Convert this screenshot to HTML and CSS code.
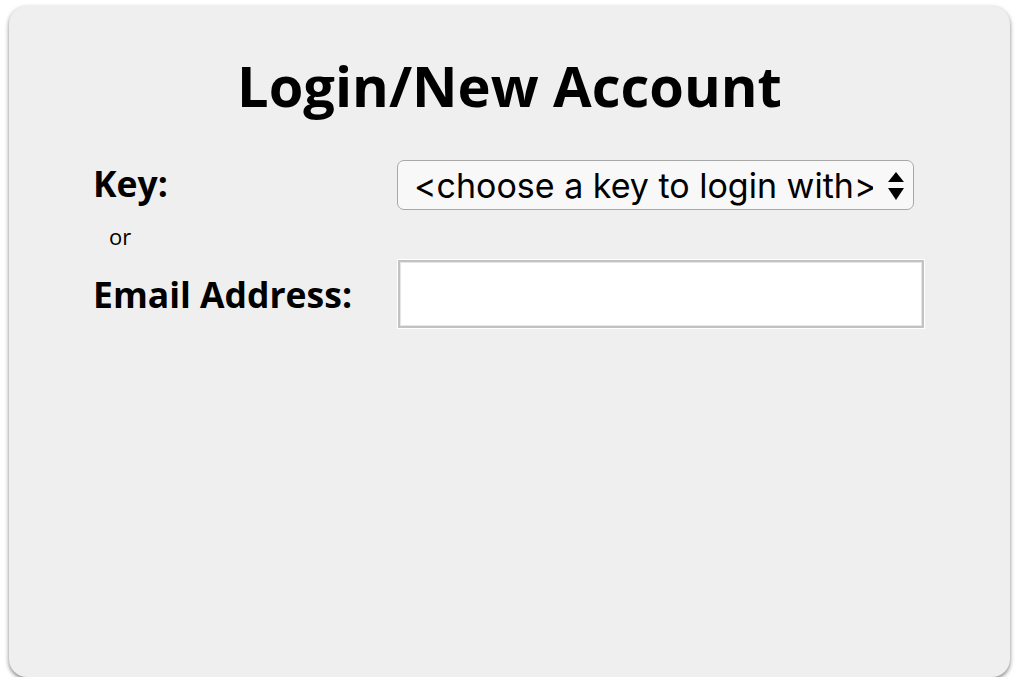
FILE: index.html
```html
<!DOCTYPE html>
<html lang="en">
<head>
<meta charset="utf-8">
<title>Login/New Account</title>
<link rel="stylesheet" href="styles.css">
</head>
<body>
<main class="panel">
  <h1 class="title">Login/New Account</h1>
  <form class="form">
    <div class="row row-key">
      <label class="label label-key" for="key">Key:</label>
      <div class="select-wrap">
        <select id="key" class="select">
          <option>&lt;choose a key to login with&gt;</option>
        </select>
        <svg class="select-arrows" width="18" height="30" viewBox="0 0 18 30" aria-hidden="true">
          <polygon points="1,11 17,11 9,1" fill="#000"/>
          <polygon points="1,17 17,17 9,29" fill="#000"/>
        </svg>
      </div>
    </div>
    <div class="or">or</div>
    <div class="row row-email">
      <label class="label" for="email">Email Address:</label>
      <input id="email" class="input" type="text">
    </div>
  </form>
</main>
</body>
</html>
```

FILE: styles.css
```css
html, body {
  margin: 0;
  padding: 0;
  background: #ffffff;
}

body {
  padding: 6px 0 0 9px;
  font-family: "Open Sans", "Liberation Sans", sans-serif;
  color: #000;
}

.panel {
  box-sizing: border-box;
  width: 1001px;
  height: 671px;
  padding: 40px 86px 0 84px;
  background: #efefef;
  border-radius: 18px;
  box-shadow: 0 2px 4px rgba(0, 0, 0, 0.5);
}

.title {
  margin: 0;
  text-align: center;
  font-family: "Open Sans", sans-serif;
  font-weight: 700;
  font-size: 56px;
  line-height: 78px;
  padding-left: 2px;
}

.form {
  margin-top: 36px;
}

.row {
  display: flex;
  align-items: center;
}

.label {
  width: 304px;
  flex: none;
  font-family: "Open Sans", sans-serif;
  font-weight: 700;
  font-size: 35.5px;
  line-height: 44px;
}

.label-key {
  padding-bottom: 4px;
}

.select-wrap {
  position: relative;
  width: 517px;
  height: 50px;
}

.select {
  appearance: none;
  -webkit-appearance: none;
  box-sizing: border-box;
  width: 517px;
  height: 50px;
  margin: 0;
  padding: 0 40px 0 16px;
  border: 1px solid #a8a8a8;
  border-radius: 7px;
  background: #f8f8f8;
  font-family: "Inter", "Liberation Sans", sans-serif;
  font-size: 34px;
  color: #000;
  outline: none;
}

.select-arrows {
  position: absolute;
  right: 9px;
  top: 11px;
  pointer-events: none;
}

.or {
  margin-top: 11px;
  padding-left: 16px;
  font-family: "Open Sans", sans-serif;
  font-size: 22px;
  line-height: 30px;
}

.row-email {
  margin-top: 9px;
}

.input {
  box-sizing: border-box;
  width: 526px;
  height: 68px;
  margin: 0 0 0 1px;
  padding: 0 8px;
  border: 2px solid #c2c2c2;
  border-radius: 0;
  background: #ffffff;
  box-shadow: 0 0 0 1px #ffffff, inset 0 0 0 1px #e6e6e6;
  font-family: "Open Sans", sans-serif;
  font-size: 24px;
  outline: none;
}
```
